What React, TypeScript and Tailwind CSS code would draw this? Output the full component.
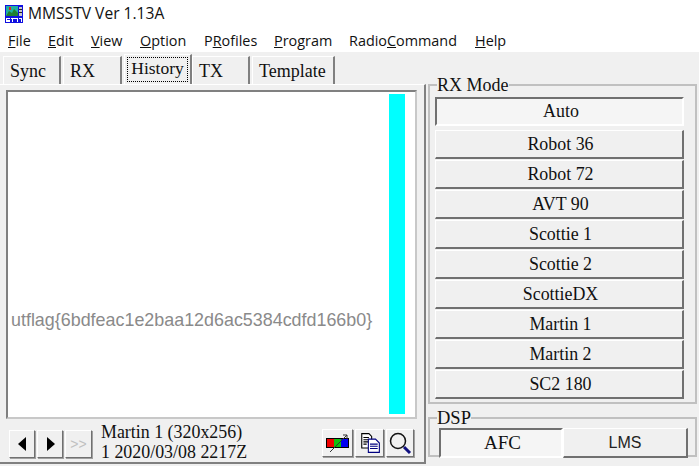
import React from 'react';

const raised = 'border border-t-white border-l-white border-r-[#707070] border-b-[#707070] shadow-[1px_1px_0_#a0a0a0] bg-[#f0f0f0]';
const serif = "font-['Liberation_Serif',serif]";

const menus = [
  ['F', 'ile'],
  ['E', 'dit'],
  ['V', 'iew'],
  ['O', 'ption'],
];

const modes = ['Robot 36', 'Robot 72', 'AVT 90', 'Scottie 1', 'Scottie 2', 'ScottieDX', 'Martin 1', 'Martin 2', 'SC2 180'];

function AppIcon() {
  return (
    <svg width="18" height="18" viewBox="0 0 18 18" className="shrink-0">
      <rect width="18" height="18" fill="#1010e0" />
      <rect x="1" y="1" width="12" height="10" fill="#20b0a0" />
      <path d="M1 11 L4 6 L7 8 L9 4 L13 8 V11 Z" fill="#208030" />
      <rect x="4" y="2" width="2" height="3" fill="#e02020" />
      <rect x="14" y="2" width="3" height="9" fill="#c8c8c8" />
      <rect x="14" y="4" width="3" height="1" fill="#202020" />
      <rect x="14" y="7" width="3" height="1" fill="#202020" />
      <path d="M1 13h4v1H2v1h3v2H1M6 13h4v1H6zM7 14h1v3H7zM10 13h3v4h-1v-3h-2zM14 13h3v4h-1v-3h-2z" fill="#ffffff" />
    </svg>
  );
}

function Tab({ label, width, active }: { label: string; width: string; active?: boolean }) {
  if (active) {
    return (
      <div className={`${width} h-[30px] -mt-[1px] bg-[#f0f0f0] border-t border-l border-white border-r-2 border-r-[#808080] flex items-start justify-center pt-[2px] px-[2px]`}>
        <span className={`${serif} text-[17.5px] leading-[20px] text-[#111] border border-dotted border-black h-[25px] w-full text-center`}>{label}</span>
      </div>
    );
  }
  return (
    <div className={`${width} h-[28px] bg-[#f0f0f0] border-t border-l border-white border-r-2 border-r-[#808080] pl-[6px] pt-[3px] ${serif} text-[18px] leading-[22px] text-[#111]`}>
      {label}
    </div>
  );
}

function ToolBtn({ width, children }: { width: string; children: React.ReactNode }) {
  return <div className={`${raised} ${width} h-[28px] flex items-center justify-center`}>{children}</div>;
}

export default function App() {
  return (
    <div className="w-[699px] h-[466px] overflow-hidden bg-[#f0f0f0] flex flex-col">
      {/* title bar */}
      <div className="h-[30px] bg-white flex items-center pl-[5px] pb-[2px] gap-[5px] font-['Open_Sans',sans-serif] text-[15.6px] text-[#111]">
        <AppIcon />
        <span>MMSSTV Ver 1.13A</span>
      </div>

      {/* menu */}
      <div className="h-[22px] bg-white flex items-center pl-[8px] font-['Open_Sans',sans-serif] text-[14.4px] text-[#111]">
        {menus.map(([k, rest], i) => (
          <span key={rest} className={['w-[40px]', 'w-[43px]', 'w-[49px]', 'w-[64px]'][i]}>
            <span className="underline">{k}</span>
            {rest}
          </span>
        ))}
        <span className="w-[70px]">P<span className="underline">R</span>ofiles</span>
        <span className="w-[75px]"><span className="underline">P</span>rogram</span>
        <span className="w-[126px]">Radio<span className="underline">C</span>ommand</span>
        <span><span className="underline">H</span>elp</span>
      </div>

      <div className="flex flex-1 min-h-0">
        {/* left column */}
        <div className="w-[426px] h-[411px] flex flex-col">
          <div className="h-[32px] flex items-end pl-[3px] gap-[2px] pt-[3px]">
            <Tab label="Sync" width="w-[58px]" />
            <Tab label="RX" width="w-[59px]" />
            <Tab label="History" width="w-[68px] -mr-[2px]" active />
            <Tab label="TX" width="w-[58px]" />
            <Tab label="Template" width="w-[83px]" />
          </div>
          <div className="flex-1 border-t border-white border-r-2 border-r-[#808080] border-b-2 border-b-[#808080] pl-[6px] pr-[7px] pt-[5px] flex flex-col">
            <div className="h-[329px] bg-white border-2 border-[#808080] border-r-[#c8c8c8] border-b-[#c8c8c8] flex">
              <div className="w-[381px] flex flex-col justify-end pb-[88px]">
                <span className="pl-[3px] font-['Liberation_Sans',sans-serif] text-[17.9px] leading-[18px] text-[#8a8a8a] whitespace-nowrap">
                  utflag{'{'}6bdfeac1e2baa12d6ac5384cdfd166b0{'}'}
                </span>
              </div>
              <div className="w-[16px] h-[320px] mt-[2px] bg-[#00ffff]" />
            </div>
            <div className="flex items-start pt-[9px] pl-[3px]">
              <div className="flex gap-[2px] pt-[2px]">
                <ToolBtn width="w-[26px]">
                  <svg width="9" height="14" viewBox="0 0 9 14"><path d="M8 0 V14 L0 7 Z" fill="#000" /></svg>
                </ToolBtn>
                <ToolBtn width="w-[26px]">
                  <svg width="9" height="14" viewBox="0 0 9 14"><path d="M1 0 V14 L9 7 Z" fill="#000" /></svg>
                </ToolBtn>
                <ToolBtn width="w-[27px]">
                  <span className="font-['Liberation_Sans',sans-serif] text-[14px] text-[#c0c0c0]">&gt;&gt;</span>
                </ToolBtn>
              </div>
              <div className={`w-[230px] -mt-[6px] pl-[9px] ${serif} text-[17.9px] leading-[20px] text-[#111] whitespace-nowrap`}>
                <div>Martin 1 (320x256)</div>
                <div>1 2020/03/08 2217Z</div>
              </div>
              <div className="flex gap-[2px] pt-[1px]">
                <ToolBtn width="w-[31px]">
                  <svg width="24" height="20" viewBox="0 0 24 20">
                    <rect x="1" y="6" width="7" height="8" fill="#f00000" />
                    <rect x="8" y="6" width="7" height="8" fill="#10c010" />
                    <rect x="15" y="6" width="7" height="8" fill="#0000f0" />
                    <rect x="0.5" y="5.5" width="22" height="9" fill="none" stroke="#000" />
                    <path d="M4 19 L21 2 M17 2 H21 V6" stroke="#333" fill="none" />
                  </svg>
                </ToolBtn>
                <ToolBtn width="w-[29px]">
                  <svg width="22" height="22" viewBox="0 0 20 20">
                    <path d="M2.5 1.5 H9 L11.5 4 V14.5 H2.5 Z" fill="#fff" stroke="#000" />
                    <path d="M4 5h5M4 7h5M4 9h5M4 11h3" stroke="#000" />
                    <path d="M8.5 6.5 H15 L18.5 10 V18.5 H8.5 Z" fill="#fff" stroke="#000080" />
                    <path d="M10 11h7M10 13h7M10 15h7" stroke="#000080" />
                  </svg>
                </ToolBtn>
                <ToolBtn width="w-[28px]">
                  <svg width="24" height="24" viewBox="0 0 24 24">
                    <circle cx="10" cy="10" r="7.5" fill="none" stroke="#111" strokeWidth="1.5" />
                    <path d="M16 16 L22 22" stroke="#101080" strokeWidth="3" />
                  </svg>
                </ToolBtn>
              </div>
            </div>
          </div>
        </div>

        {/* right column */}
        <div className="w-[273px] pl-[2px] pr-[2px] pt-[26px] flex flex-col">
          <fieldset className="h-[326px] border-2 border-[#c0c0c0] rounded-none px-[5px] pb-0 min-w-0">
            <legend className={`${serif} text-[18px] leading-[14px] text-[#111] ml-[2px] px-0`}>RX Mode</legend>
            <div className="flex flex-col w-[249px] mt-[5px] gap-[1px]">
              <div className={`h-[29px] mb-[3px] pl-[3px] bg-[#f5f5f5] border-2 border-t-[#707070] border-l-[#707070] border-r-white border-b-white flex items-center justify-center ${serif} text-[17.9px] text-[#111]`}>
                Auto
              </div>
              {modes.map((m) => (
                <div key={m} className={`h-[29px] pl-[3px] ${raised} border-r-2 border-b-2 shadow-none flex items-center justify-center ${serif} text-[17.9px] text-[#111]`}>
                  {m}
                </div>
              ))}
            </div>
          </fieldset>
          <fieldset className="h-[46px] mt-[7px] border-2 border-[#c0c0c0] px-[9px] min-w-0">
            <legend className={`${serif} text-[18.5px] leading-[14px] text-[#111] -ml-[2px] px-0`}>DSP</legend>
            <div className="flex w-[249px] mt-[3px]">
              <div className={`w-[124px] h-[30px] pl-[3px] bg-[#f5f5f5] border-2 border-t-[#707070] border-l-[#707070] border-r-white border-b-white flex items-center justify-center ${serif} text-[19px] text-[#111]`}>
                AFC
              </div>
              <div className={`w-[125px] h-[30px] ${raised} border-r-2 border-b-2 shadow-none flex items-center justify-center font-['Liberation_Sans',sans-serif] text-[16px] text-[#222]`}>
                LMS
              </div>
            </div>
          </fieldset>
        </div>
      </div>
    </div>
  );
}
